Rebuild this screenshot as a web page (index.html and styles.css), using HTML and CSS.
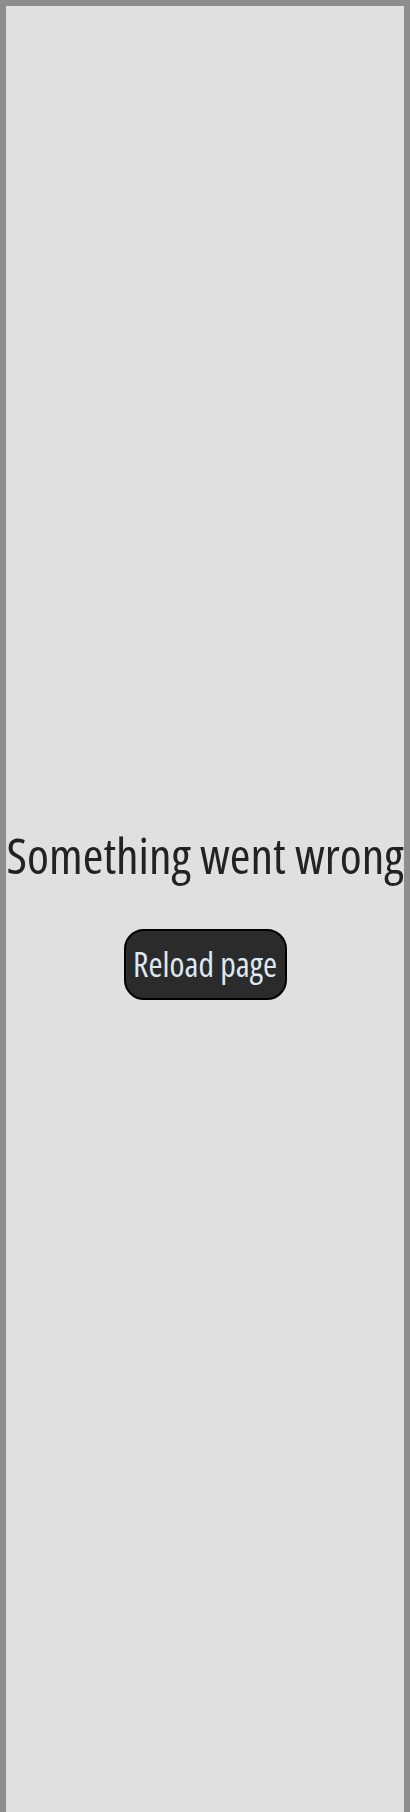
FILE: index.html
```html
<!DOCTYPE html>
<html><head><link rel="stylesheet" href="styles.css"></head>
<body>
<main class="page">
  <h1 class="title">Something went wrong</h1>
  <button class="reload" type="button">Reload page</button>
</main>
</body></html>
```
FILE: styles.css
```css
html{background:#8e8e8e}
body{margin:6px 6px 0;background:#8e8e8e;font-family:"Open Sans","Liberation Sans",sans-serif}
.page{box-sizing:border-box;background:#e0e0e0;min-height:1806px;padding-top:6px;display:flex;flex-direction:column;align-items:center;justify-content:center;gap:44px}
.title{margin:0;font-size:50px;font-weight:400;font-stretch:75%;line-height:60px;color:#222;white-space:nowrap}
.reload{width:163px;height:71px;border:2px solid #000;border-radius:20px;background:#2b2b2b;color:#dde8f2;font-family:"Open Sans",sans-serif;font-stretch:75%;font-size:34px;font-weight:500;padding:0;cursor:pointer}
```
